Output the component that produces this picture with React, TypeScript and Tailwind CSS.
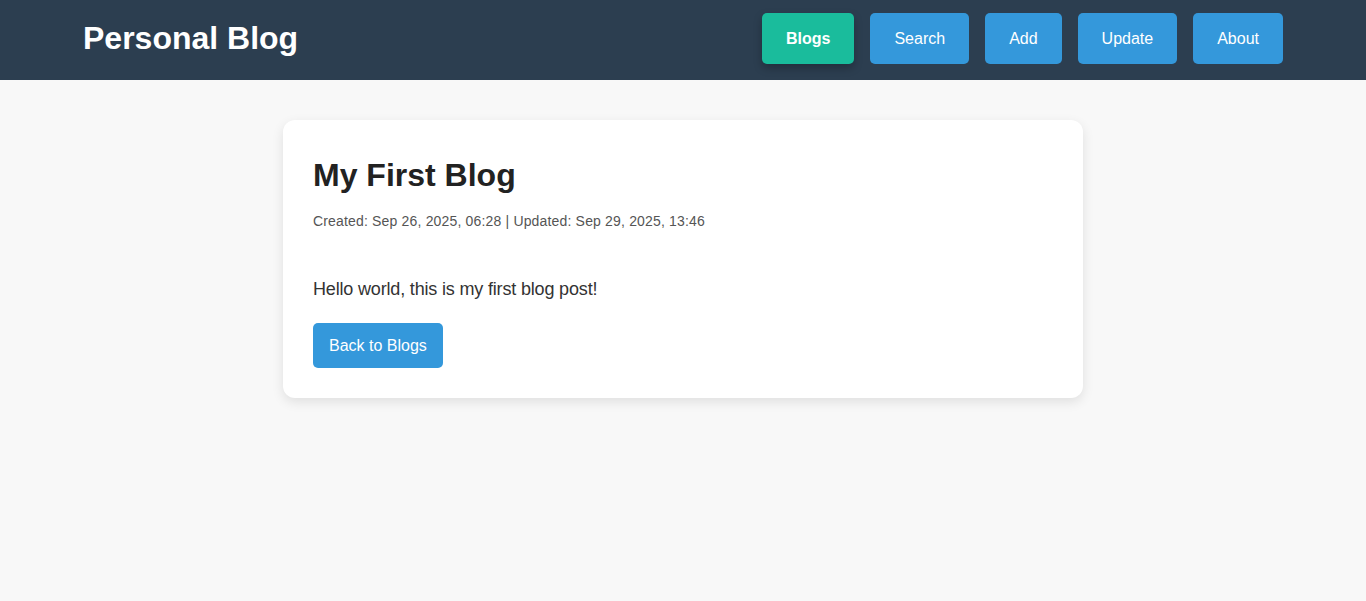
const navItems = [
  { label: "Blogs", active: true },
  { label: "Search", active: false },
  { label: "Add", active: false },
  { label: "Update", active: false },
  { label: "About", active: false },
];

export default function App() {
  return (
    <div className="min-h-[601px] bg-[#f8f8f8] font-['Liberation_Sans',Arial,sans-serif]">
      <header className="bg-[#2c3e50] pb-1">
        <div className="mx-auto flex h-[76px] max-w-[1200px] items-center justify-between">
          <h1 className="text-[32px] font-bold leading-[37px] text-white">Personal Blog</h1>
          <nav className="flex gap-4">
            {navItems.map((item) => (
              <button
                key={item.label}
                className={
                  item.active
                    ? "h-[51px] rounded-[5px] bg-[#1abc9c] px-6 pt-px text-base font-bold text-white shadow-[0_4px_8px_rgba(0,0,0,0.25)]"
                    : "h-[51px] rounded-[5px] bg-[#3498db] px-6 pt-px text-base text-white"
                }
              >
                {item.label}
              </button>
            ))}
          </nav>
        </div>
      </header>

      <main className="px-4 pt-10">
        <article className="mx-auto w-[800px] rounded-xl bg-white p-[30px] shadow-[0_4px_12px_rgba(0,0,0,0.1)]">
          <h2 className="mt-[7px] text-[32px] font-bold leading-[37px] text-[#222]">My First Blog</h2>
          <p className="mt-[19px] text-sm leading-4 tracking-[0.17px] text-[#555]">
            Created: Sep 26, 2025, 06:28 | Updated: Sep 29, 2025, 13:46
          </p>
          <p className="mt-[50px] text-lg leading-[21px] tracking-[-0.17px] text-[#333]">
            Hello world, this is my first blog post!
          </p>
          <button className="mt-[23px] h-[45px] rounded-[5px] bg-[#3498db] px-4 text-base text-white">
            Back to Blogs
          </button>
        </article>
      </main>
    </div>
  );
}
